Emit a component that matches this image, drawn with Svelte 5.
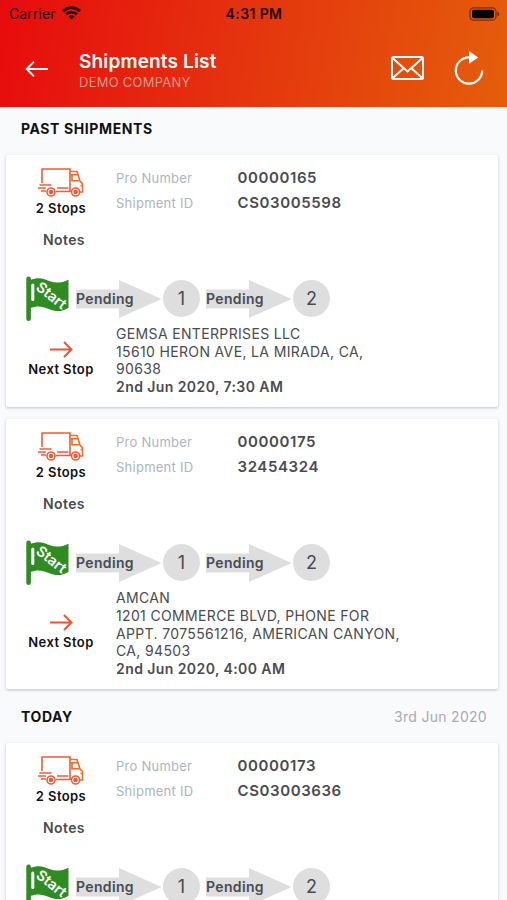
<script lang="ts">
  type Stop = { name: string; address: string; time: string };
  type Shipment = { pro: string; id: string; notes: string; next: Stop | null };
  type Section = { title: string; date: string; shipments: Shipment[] };

  const sections: Section[] = [
    {
      title: 'PAST SHIPMENTS',
      date: '',
      shipments: [
        {
          pro: '00000165',
          id: 'CS03005598',
          notes: 'Notes',
          next: {
            name: 'GEMSA ENTERPRISES LLC',
            address: '15610 HERON AVE, LA MIRADA, CA, 90638',
            time: '2nd Jun 2020, 7:30 AM',
          },
        },
        {
          pro: '00000175',
          id: '32454324',
          notes: 'Notes',
          next: {
            name: 'AMCAN',
            address: '1201 COMMERCE BLVD, PHONE FOR APPT. 7075561216, AMERICAN CANYON, CA, 94503',
            time: '2nd Jun 2020, 4:00 AM',
          },
        },
      ],
    },
    {
      title: 'TODAY',
      date: '3rd Jun 2020',
      shipments: [
        {
          pro: '00000173',
          id: 'CS03003636',
          notes: 'Notes',
          next: null,
        },
      ],
    },
  ];

  const stops = [1, 2];
</script>

<div class="screen">
  <header>
    <div class="status">
      <div class="carrier">
        <span>Carrier</span>
        <svg width="19" height="14" viewBox="0 0 19 14" fill="none" stroke="#260604" stroke-width="2.9">
          <path d="M1 5.1a12.2 12.2 0 0 1 17 0" />
          <path d="M4.1 8.3a7.7 7.7 0 0 1 10.8 0" />
          <path d="M9.5 13.6 6.5 10.5a4.3 4.3 0 0 1 6 0z" fill="#260604" stroke="none" />
        </svg>
      </div>
      <span class="clock">4:31 PM</span>
      <svg class="battery" width="31" height="14" viewBox="0 0 31 14">
        <rect x="1" y="0.8" width="26" height="12.4" rx="3.6" fill="none" stroke="#7c2c0c" stroke-width="1.2" />
        <rect x="3" y="2.7" width="22" height="8.6" rx="2" fill="#000" />
        <path d="M28.4 4.6q2 .8 2 2.4t-2 2.4z" fill="#7c2c0c" />
      </svg>
    </div>
    <div class="toolbar">
      <svg class="back" width="24" height="18" viewBox="0 0 24 18" fill="none" stroke="#fff" stroke-width="1.9">
        <path d="M23 9H2M9 1.7 1.7 9 9 16.3" />
      </svg>
      <div class="heading">
        <h1>Shipments List</h1>
        <p>DEMO COMPANY</p>
      </div>
      <svg class="mail" width="33" height="24" viewBox="0 0 33 24" fill="none" stroke="#fff" stroke-width="2">
        <rect x="1" y="1" width="31" height="22" rx="1.5" />
        <path d="M1.5 2 16.5 15.5 31.5 2M1.5 22.2 12.4 12.4M31.5 22.2 20.6 12.4" />
      </svg>
      <svg class="reload" width="30" height="34" viewBox="0 0 30 34">
        <path d="M28.2 19.5A13.2 13.2 0 1 1 15 6.3" fill="none" stroke="#fff" stroke-width="2.2" />
        <path d="M15 0v12.8l9.2-6.4z" fill="#fff" />
      </svg>
    </div>
  </header>

  {#each sections as section}
    <div class="section-title">
      <h2>{section.title}</h2>
      <span>{section.date}</span>
    </div>
    {#each section.shipments as shipment}
      <article>
        <div class="summary">
          <div class="side">
            <svg width="46" height="30" viewBox="0 0 46 30" fill="none" stroke="#f25a38" stroke-width="1.6">
              <path d="M4 16V2h28v22" />
              <path d="M32 4.500h7l3 9.500 2.500 2.500V25H42M32 7.700h7.600M34 7.700v6h7.500M42.500 18.500h2" stroke="#f56a24" />
              <path d="M1.500 18h12M0 21h8M3 24h5M19 21h11.500M18 24.500h15" />
              <circle cx="13" cy="25" r="4" />
              <circle cx="13" cy="25" r="1.5" fill="#f2532f" />
              <circle cx="37.6" cy="25" r="4" />
              <circle cx="37.6" cy="25" r="1.5" fill="#f2532f" />
            </svg>
            <strong>2 Stops</strong>
          </div>
          <dl>
            <dt>Pro Number</dt>
            <dd>{shipment.pro}</dd>
            <dt>Shipment ID</dt>
            <dd>{shipment.id}</dd>
          </dl>
        </div>
        <div class="notes">{shipment.notes}</div>
        <div class="route">
          <svg class="flag" width="44" height="46" viewBox="0 0 44 46">
            <path d="M2.6 2.8v40" stroke="#2f8c22" stroke-width="4.6" stroke-linecap="round" />
            <path d="M4 4C13 .5 18 2.5 24 5.2c6 2.5 12 1.5 18.500-1.500v28C36 36 30 36 23 33 16 30 11 29.500 4 32z" fill="#2f8c22" />
            <path d="M6.8 9v14.500" stroke="#fff" stroke-width="3" stroke-linecap="round" />
            <text x="9" y="13" transform="rotate(38 9 13)">Start</text>
          </svg>
          {#each stops as stop}
            <div class="leg">
              <svg width="86" height="38" viewBox="0 0 86 38">
                <path d="M0 9.500h43V0l42.500 19L43 38v-9.500H0z" fill="#dedede" />
              </svg>
              <span>Pending</span>
            </div>
            <div class="stop">{stop}</div>
          {/each}
        </div>
        {#if shipment.next}
          <div class="next">
            <div class="side">
              <svg width="23" height="17" viewBox="0 0 23 17" fill="none" stroke="#f0532d" stroke-width="1.9">
                <path d="M0 8.500h21.500M14 1l7.500 7.500L14 16" />
              </svg>
              <strong>Next Stop</strong>
            </div>
            <address>
              <div>{shipment.next.name}</div>
              <div>{shipment.next.address}</div>
              <b>{shipment.next.time}</b>
            </address>
          </div>
        {/if}
      </article>
    {/each}
  {/each}
</div>

<style>
  :global(body) {
    overflow: hidden;
  }

  .screen {
    height: 900px;
    overflow: hidden;
    background: #f8fafc;
    font-family: Inter, 'Liberation Sans', sans-serif;
    color: #484b50;
  }

  svg {
    display: block;
    flex: none;
  }

  h1,
  h2,
  p,
  dl,
  dd {
    margin: 0;
  }

  header {
    box-sizing: border-box;
    height: 107px;
    background: linear-gradient(100deg, #e70b0d 0%, #e4340e 48%, #e45e0b 100%);
  }

  .status {
    display: grid;
    grid-template-columns: 1fr auto 1fr;
    align-items: center;
    height: 27px;
    padding: 0 7px 0 9px;
    color: #260604;
    font-size: 14px;
  }

  .carrier {
    display: flex;
    align-items: center;
    gap: 6px;
    letter-spacing: 0.1px;
  }

  .carrier svg {
    margin-top: -2px;
  }

  .clock {
    margin-right: 1px;
    font-weight: 600;
    letter-spacing: 0.4px;
  }

  .battery {
    justify-self: end;
  }

  .toolbar {
    display: flex;
    align-items: center;
    height: 82px;
    padding: 0 23px 0 25px;
  }

  .back {
    margin-top: 2px;
  }

  .heading {
    flex: 1;
    margin: 5px 0 0 30px;
  }

  h1 {
    color: #fff;
    font-size: 19px;
    font-weight: 600;
    line-height: 22px;
    letter-spacing: 0.15px;
  }

  p {
    color: #d39a91;
    font-size: 13px;
    line-height: 18px;
    letter-spacing: 0.25px;
  }

  .mail {
    margin: 0 30px 0 0;
  }

  .section-title {
    display: flex;
    align-items: center;
    justify-content: space-between;
    height: 42px;
    padding: 0 20px 0 21px;
  }

  h2 {
    color: #111;
    font-size: 14px;
    font-weight: 700;
    letter-spacing: 0.6px;
  }

  .section-title span {
    color: #a9abad;
    font-size: 14px;
    letter-spacing: 0.3px;
  }

  article {
    margin: 6px 9px 12px 6px;
    padding: 12px 0;
    background: #fff;
    border-radius: 2px;
    box-shadow: 0 1px 3px rgb(40 50 60 / 28%);
  }

  article:has(+ .section-title) {
    margin-bottom: 6px;
  }

  .summary {
    display: flex;
    height: 52px;
  }

  .side {
    display: flex;
    flex-direction: column;
    align-items: center;
    gap: 1px;
    width: 110px;
    color: #111;
    font-size: 13px;
    letter-spacing: 0.4px;
  }

  .side strong {
    font-weight: 600;
    line-height: 20px;
  }

  dl {
    display: grid;
    grid-template-columns: 121.5px auto;
    grid-auto-rows: 25.5px;
    align-content: start;
    margin-top: -0.5px;
    line-height: 22px;
  }

  dt {
    color: #adb4bd;
    font-size: 13px;
    letter-spacing: 0.25px;
  }

  dd {
    font-size: 15px;
    font-weight: 600;
    letter-spacing: 0.6px;
  }

  .notes {
    width: 116px;
    margin-top: 11px;
    font-size: 14px;
    font-weight: 600;
    line-height: 20px;
    letter-spacing: 0.4px;
    text-align: center;
  }

  .route {
    display: flex;
    align-items: center;
    height: 46px;
    margin-top: 25.6px;
    padding-left: 20px;
  }

  .flag text {
    fill: #fff;
    font-size: 14.5px;
    font-weight: 600;
  }

  .leg {
    display: grid;
    align-items: center;
    margin: 0 1px 0 6px;
  }

  .leg > * {
    grid-area: 1 / 1;
  }

  .leg span {
    margin-top: -1px;
    font-size: 14px;
    font-weight: 600;
    letter-spacing: 0.35px;
  }

  .stop {
    width: 37px;
    height: 37px;
    border-radius: 50%;
    background: #dedede;
    font-size: 18px;
    line-height: 37px;
    text-align: center;
  }

  .next {
    display: flex;
    align-items: center;
    margin-top: 3.4px;
  }

  address {
    width: 289px;
    font-size: 14px;
    font-style: normal;
    line-height: 17.6px;
    letter-spacing: 0.35px;
  }

  b {
    font-weight: 600;
    letter-spacing: 0.42px;
  }
</style>
